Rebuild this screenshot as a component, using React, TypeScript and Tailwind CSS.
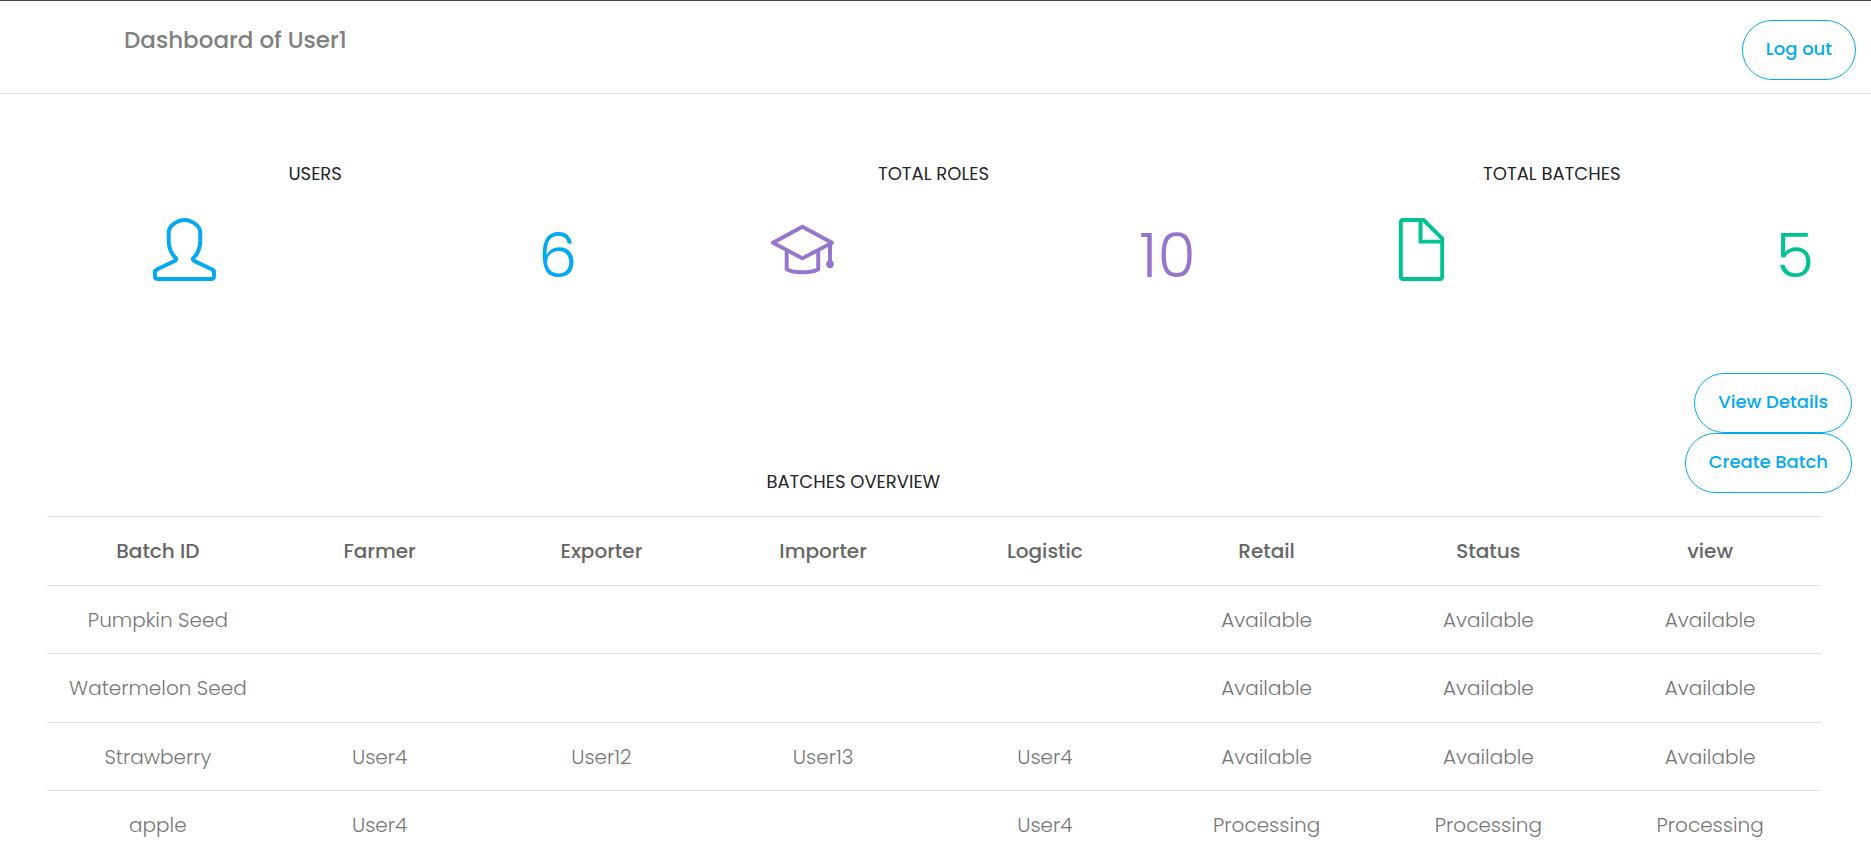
import type { ReactNode } from "react";
import { SlDoc, SlGraduation, SlUser } from "react-icons/sl";

type Stat = { title: string; value: number; icon: ReactNode; color: string };

const stats: Stat[] = [
  { title: "USERS", value: 6, icon: <SlUser />, color: "text-[#03a9f3]" },
  { title: "TOTAL ROLES", value: 10, icon: <SlGraduation />, color: "text-[#9675ce]" },
  { title: "TOTAL BATCHES", value: 5, icon: <SlDoc />, color: "text-[#00c292]" },
];

const columns = ["Batch ID", "Farmer", "Exporter", "Importer", "Logistic", "Retail", "Status", "view"];

const batches: string[][] = [
  ["Pumpkin Seed", "", "", "", "", "Available", "Available", "Available"],
  ["Watermelon Seed", "", "", "", "", "Available", "Available", "Available"],
  ["Strawberry", "User4", "User12", "User13", "User4", "Available", "Available", "Available"],
  ["apple", "User4", "", "", "User4", "Processing", "Processing", "Processing"],
];

function PillButton({ children }: { children: ReactNode }) {
  return (
    <button
      type="button"
      className="h-15 cursor-pointer rounded-full border border-[#03a9f3] bg-white px-[23px] pb-0.5 text-lg font-medium whitespace-nowrap text-[#03a9f3]"
    >
      {children}
    </button>
  );
}

function StatCard({ title, value, icon, color }: Stat) {
  return (
    <section className="pt-17">
      <h2 className="text-center text-lg leading-6 text-[#212529]">{title}</h2>
      <div className={`mt-6 flex items-start justify-between pr-[47px] pl-[147px] ${color}`}>
        <span className="pt-2 text-[63px] leading-16">{icon}</span>
        <span className="pt-[14px] text-[62px] leading-16 font-light">{value}</span>
      </div>
    </section>
  );
}

export default function App() {
  return (
    <div className="bg-white font-['Poppins','Inter',sans-serif] text-[#212529]">
      <header className="flex items-start justify-between border-t border-b border-t-[#4a444c] border-b-[#dfe3e6] pr-[15px] pb-[13px] pl-31">
        <h1 className="pt-[23px] text-[23px] leading-8 font-medium text-[#808080]">Dashboard of User1</h1>
        <div className="pt-[19px]">
          <PillButton>Log out</PillButton>
        </div>
      </header>

      <main>
        <div className="grid grid-cols-3 pr-2.5 pl-1.5">
          {stats.map((stat) => (
            <StatCard key={stat.title} {...stat} />
          ))}
        </div>

        <div className="mt-[85px] flex items-end pr-[19px] pl-5.5">
          <h2 className="flex-1 text-center text-lg leading-[22px] text-[#212529]">BATCHES OVERVIEW</h2>
          <div className="flex flex-col items-end">
            <PillButton>View Details</PillButton>
            <PillButton>Create Batch</PillButton>
          </div>
        </div>

        <div className="mt-[23px] pr-12.5 pl-[47px]">
          <table className="w-full table-fixed border-collapse text-center text-xl">
            <thead>
              <tr className="h-[69px] border-t border-[#dee2e6]">
                {columns.map((column) => (
                  <th key={column} scope="col" className="font-medium text-[#666666]">
                    {column}
                  </th>
                ))}
              </tr>
            </thead>
            <tbody>
              {batches.map((batch) => (
                <tr key={batch[0]} className="border-t border-[#dee2e6] odd:h-[68px] even:h-[69px]">
                  {batch.map((cell, i) => (
                    <td key={columns[i]} className="font-light text-[#777777]">
                      {cell}
                    </td>
                  ))}
                </tr>
              ))}
            </tbody>
          </table>
        </div>
      </main>
    </div>
  );
}
